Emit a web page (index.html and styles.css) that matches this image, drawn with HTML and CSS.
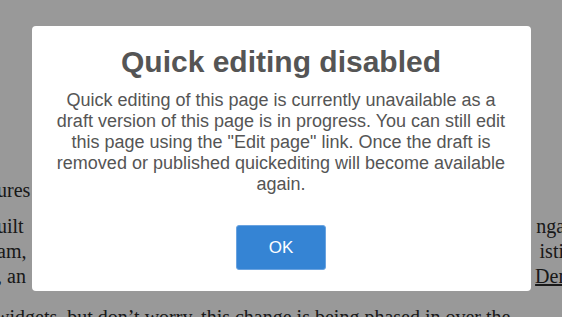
FILE: index.html
```html
<!DOCTYPE html>
<html lang="en">
    <head>
        <meta charset="UTF-8">
        <title>Quick editing disabled</title>
        <link rel="stylesheet" href="styles.css">
    </head>
    <body>
        <div class="article">
            <div class="para">
                <div class="line"><span>ures</span></div>
            </div>
            <div class="para">
                <div class="line"><span>uilt</span><span>ngage</span></div>
                <div class="line"><span>am,</span><span>isting</span></div>
                <div class="line"><span>, an</span><a href="#">Demo</a></div>
            </div>
            <div class="para last">
                <div class="line"><span>widgets, but don’t worry, this change is being phased in over the</span></div>
            </div>
        </div>

        <div class="overlay">
            <div class="modal">
                <h2>Quick editing disabled</h2>
                <p>Quick editing of this page is currently unavailable as a draft version of this page is in progress. You can still edit this page using the "Edit page" link. Once the draft is removed or published quickediting will become available again.</p>
                <button class="ok">OK</button>
            </div>
        </div>
    </body>
</html>
```

FILE: styles.css
```css
html, body {
    margin: 0;
    height: 100%;
    overflow: hidden;
}
body {
    background: #fff;
    font-family: 'Liberation Serif', serif;
    font-size: 20px;
    color: #2a2a2a;
}
.article {
    padding-top: 178px;
    margin-left: -3px;
    margin-right: -22px;
}
.para {
    margin-bottom: 11px;
}
.para.last {
    padding-top: 5px;
    margin-left: -2px;
}
.line {
    display: flex;
    justify-content: space-between;
    line-height: 25px;
    white-space: nowrap;
}
.line a {
    color: inherit;
}
.overlay {
    position: fixed;
    inset: 0;
    background: rgba(0, 0, 0, 0.4);
    display: flex;
    align-items: center;
    justify-content: center;
}
.modal {
    width: 499px;
    box-sizing: border-box;
    background: #fff;
    border-radius: 4px;
    padding: 19px 24px 21px;
    text-align: center;
    font-family: 'Liberation Sans', Arial, sans-serif;
    color: #555;
}
.modal h2 {
    font-size: 30px;
    margin: 0 0 11px;
}
.modal p {
    font-size: 18px;
    line-height: 21px;
    margin: 0;
}
.ok {
    margin-top: 30px;
    width: 90px;
    height: 45px;
    background: #3584d4;
    border: 1px solid #6aa3e0;
    border-radius: 3px;
    color: #fff;
    font-family: 'Liberation Sans', Arial, sans-serif;
    font-size: 17px;
}
```
